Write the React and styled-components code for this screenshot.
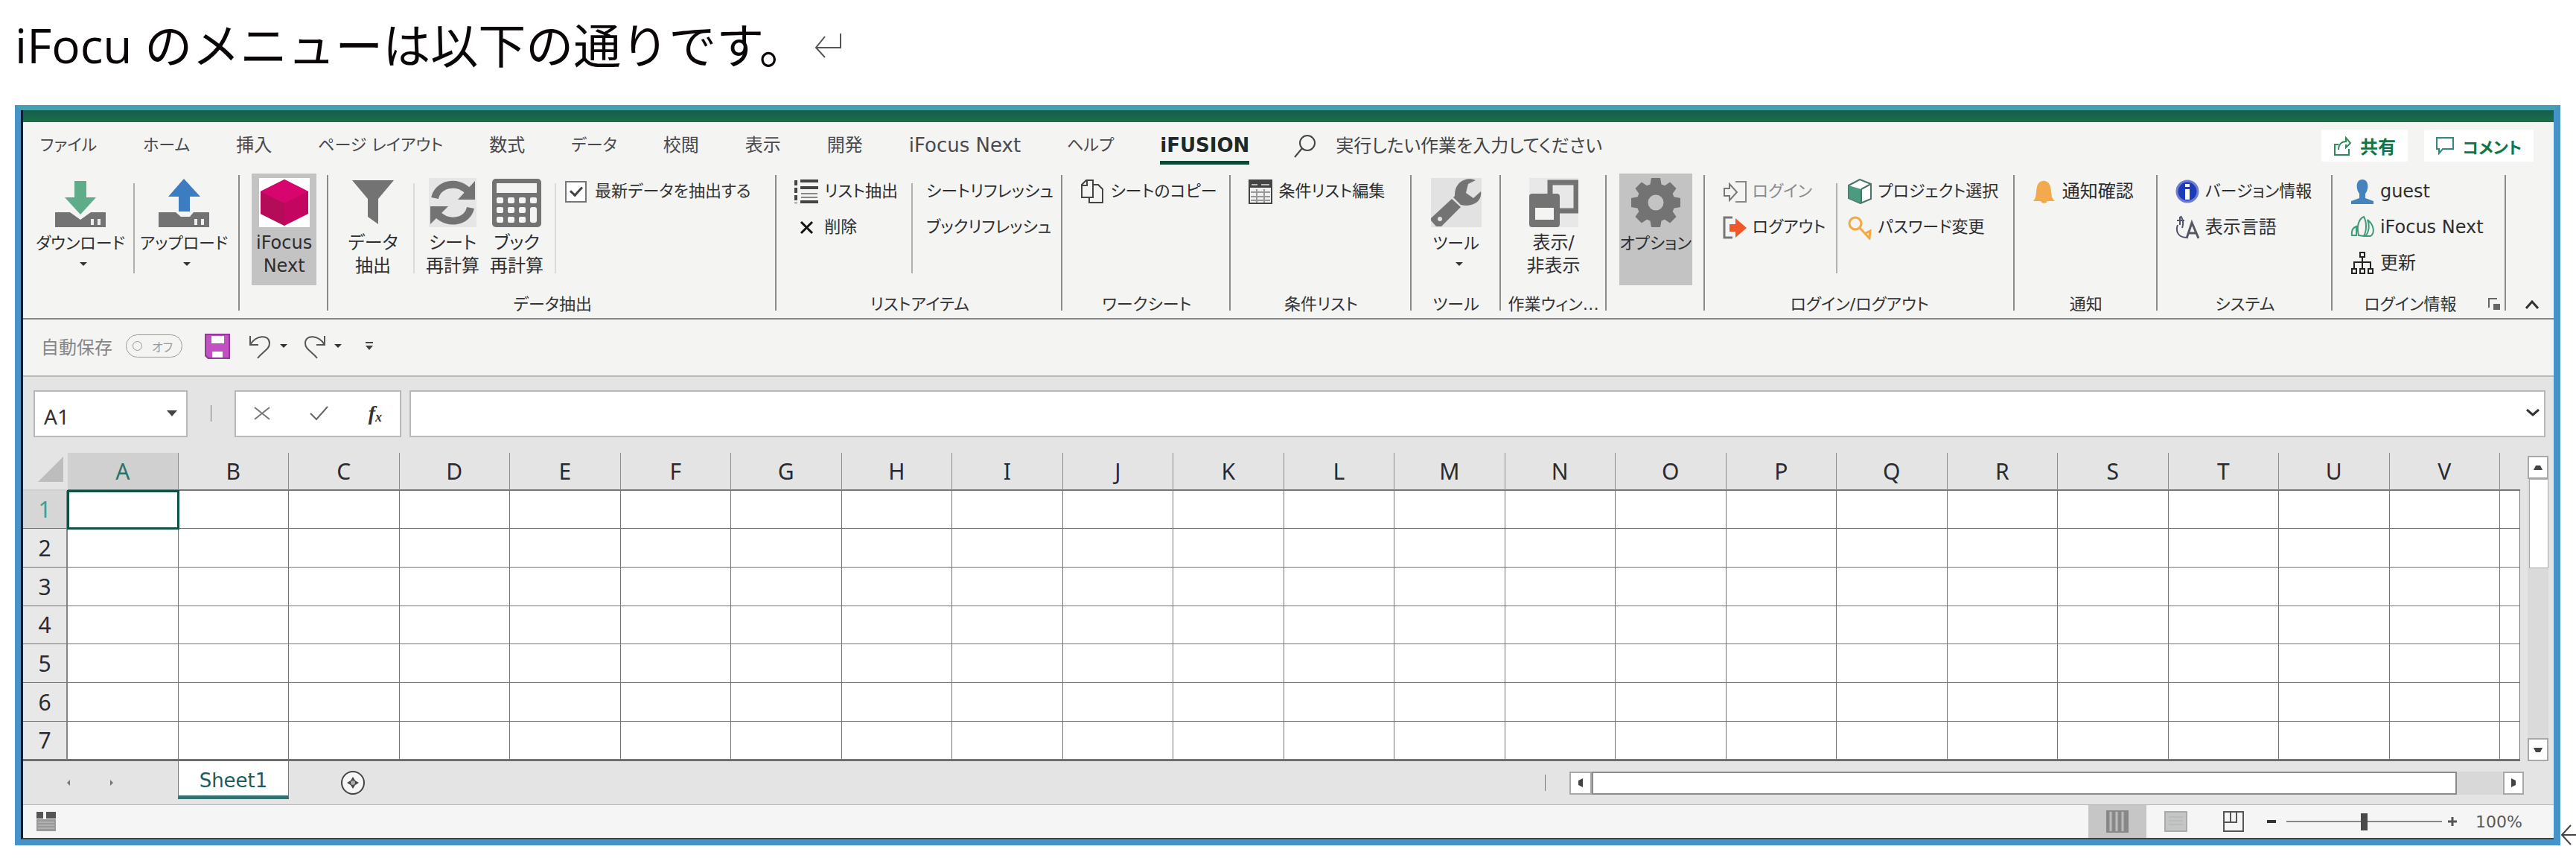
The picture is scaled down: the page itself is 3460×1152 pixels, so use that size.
import React from "react";
import styled, { createGlobalStyle, css } from "styled-components";

const GlobalStyle = createGlobalStyle`
  *, *::before, *::after { box-sizing: border-box; }
  body { margin: 0; background: #fff; overflow-x: hidden; }
  button, input { font: inherit; color: inherit; margin: 0; }
  svg { display: block; flex: none; }
`;

const uiFont = `"DejaVu Sans", "Noto Sans CJK JP", sans-serif`;
const sheetFont = `"Noto Sans", "Noto Sans CJK JP", sans-serif`;

/* ---------- page ---------- */
const Page = styled.main`
  padding: 0 21px 16px 20px;
  color: #333;
  font-family: ${uiFont};
  font-size: 24px;
  font-feature-settings: "palt";
`;
const Heading = styled.h1`
  display: flex;
  align-items: center;
  gap: 10px;
  height: 141px;
  margin: 0;
  padding-bottom: 20px;
  color: #0a0608;
  font: 400 64px/100px "Open Sans", "Noto Sans CJK JP", sans-serif;
  font-feature-settings: normal;
`;
const Figure = styled.div`
  display: flex;
  align-items: flex-end;
  margin-right: -21px;
`;
const Window = styled.section`
  flex: 1;
  min-width: 0;
  border: solid #4593c8;
  border-width: 7px 9px 8px 8px;
  border-top-color: #46a0b4;
  background: #f4f4f3;
`;
const Frame = styled.div`
  border-left: 3px solid #0a2036;
  border-bottom: 2px solid #2c4a4c;
`;
const AfterFigure = styled.div`
  width: 21px;
  overflow: hidden;
`;
const TitleBar = styled.div`
  height: 16px;
  background: linear-gradient(#125f4f, #1c6e46);
`;

/* ---------- tabs ---------- */
const TabRow = styled.nav`
  display: flex;
  align-items: flex-start;
  height: 69px;
  padding: 10px 27px 0 23px;
`;
const Tabs = styled.div`
  display: flex;
  gap: 62px;
`;
const Tab = styled.button`
  height: 47px;
  padding: 0;
  border: 0;
  border-bottom: 5px solid ${(p) => (p.$active ? "#0b4a36" : "transparent")};
  background: none;
  color: ${(p) => (p.$active ? "#1f2a28" : "#4a4a4e")};
  font-size: ${(p) => p.$size}px;
  font-weight: ${(p) => (p.$active ? 700 : 400)};
  line-height: 42px;
  white-space: nowrap;
`;
const Search = styled.label`
  display: flex;
  flex: 1;
  align-items: center;
  gap: 26px;
  height: 44px;
  margin-left: 60px;
`;
const SearchInput = styled.input`
  flex: 1;
  min-width: 0;
  padding: 0;
  border: 0;
  background: none;
  outline: 0;
  &::placeholder { color: #444; opacity: 1; }
`;
const Actions = styled.div`
  display: flex;
  gap: 22px;
`;
const ActionButton = styled.button`
  display: flex;
  align-items: center;
  justify-content: center;
  gap: 12px;
  width: ${(p) => p.$w}px;
  height: 43px;
  padding: 0;
  border: 0;
  border-radius: 2px;
  background: #fff;
  color: #12744a;
  font-size: ${(p) => p.$size}px;
  font-weight: 700;
  white-space: nowrap;
`;

/* ---------- ribbon ---------- */
const Ribbon = styled.div`
  display: flex;
  height: 196px;
  border-bottom: 2px solid #858587;
`;
const Group = styled.section`
  display: flex;
  flex: ${(p) => p.$w} 1 0;
  flex-direction: column;
  justify-content: space-between;
  min-width: 0;
  padding-bottom: 3px;
  background: ${(p) =>
    p.$last ? "none" : "linear-gradient(#8b8b8b, #8b8b8b) right 2px / 2px 182px no-repeat"};
`;
const GroupBody = styled.div`
  display: flex;
  gap: ${(p) => p.$gap || 0}px;
  justify-content: ${(p) => (p.$center ? "center" : "flex-start")};
  padding-left: ${(p) => p.$pad || 0}px;
`;
const GroupLabel = styled.h2`
  display: flex;
  align-items: center;
  justify-content: center;
  margin: 0;
  font-size: 22px;
  font-weight: 400;
  line-height: 30px;
  white-space: nowrap;
`;
const LabelText = styled.span`
  flex: 1;
  text-align: center;
`;
const InnerRule = styled.div`
  flex: none;
  width: 2px;
  height: 121px;
  margin: ${(p) => p.$m || "13px 0 0"};
  background: ${(p) => (p.$light ? "#dcdada" : "#b0b0b0")};
`;
const BigButton = styled.button`
  display: flex;
  flex: none;
  flex-direction: column;
  align-items: center;
  gap: 6px;
  width: ${(p) => p.$w}px;
  height: 150px;
  padding: 6px 0 0;
  border: 0;
  background: ${(p) => (p.$selected ? "#c3c3c3" : "none")};
  color: #2e2e30;
  font-size: ${(p) => (p.$long ? 22 : 24)}px;
  line-height: 31px;
  white-space: nowrap;
`;
const BigLabel = styled.span`
  display: flex;
  flex-direction: column;
  align-items: center;
`;
const Caret = styled.span`
  width: 0;
  height: 0;
  margin: ${(p) => p.$m || "10px 0 0 8px"};
  border: solid transparent;
  border-width: 5px 5px 0;
  border-top-color: #333;
`;
const Stack = styled.div`
  display: flex;
  flex: none;
  flex-direction: column;
  align-items: flex-start;
`;
const rowStyle = css`
  display: flex;
  align-items: center;
  gap: 8px;
  height: 48px;
  padding: 0;
  border: 0;
  background: none;
  font-size: ${(p) => (p.$large ? 24 : 22)}px;
  line-height: 32px;
  white-space: nowrap;
`;
const SmallButton = styled.button`
  ${rowStyle}
  color: ${(p) => (p.disabled ? "#8c8c90" : "#2e2e30")};
`;
const CheckRow = styled.label`
  ${rowStyle}
  gap: 11px;
`;
const Checkbox = styled.input`
  display: grid;
  place-items: center;
  width: 29px;
  height: 29px;
  border: 2px solid #77777a;
  background: #fff;
  appearance: none;
  &:checked::before {
    content: "";
    width: 10px;
    height: 16px;
    margin-bottom: 4px;
    border: solid #444;
    border-width: 0 3px 3px 0;
    transform: rotate(42deg);
  }
`;
const Launcher = styled.button`
  display: grid;
  width: 16px;
  height: 20px;
  margin-right: 8px;
  padding: 0;
  border: 0;
  background: none;
`;
const Collapse = styled.button`
  display: grid;
  place-items: center;
  height: 30px;
  margin-top: auto;
  padding: 0 0 0 6px;
  border: 0;
  background: none;
`;

/* ---------- quick access ---------- */
const QuickBar = styled.div`
  display: flex;
  align-items: center;
  height: 77px;
  padding: 0 24px 4px;
  border-bottom: 2px solid #b9b9b9;
`;
const AutoSave = styled.label`
  display: flex;
  align-items: center;
  gap: 18px;
  color: #86868a;
`;
const Toggle = styled.button`
  display: flex;
  align-items: center;
  justify-content: space-between;
  width: 76px;
  height: 31px;
  padding: 0 12px 0 8px;
  border: 1px solid #99999c;
  border-radius: 16px;
  background: none;
  color: #99999c;
  font-size: 16px;
`;
const Knob = styled.span`
  width: 13px;
  height: 13px;
  border: 1px solid #99999c;
  border-radius: 50%;
`;
const QuickTools = styled.div`
  display: flex;
  align-items: center;
  gap: 12px;
  margin-left: 16px;
`;
const IconButton = styled.button`
  display: grid;
  place-items: center;
  min-width: ${(p) => p.$w || 0}px;
  padding: 0;
  border: 0;
  background: none;
`;

/* ---------- formula bar ---------- */
const Workbook = styled.div`
  background: #e4e4e4;
`;
const FormulaBar = styled.div`
  display: flex;
  align-items: center;
  height: 102px;
  padding: 0 11px 4px 14px;
`;
const Field = styled.div`
  display: flex;
  align-items: center;
  width: ${(p) => (p.$w ? `${p.$w}px` : "auto")};
  flex: ${(p) => (p.$w ? "none" : 1)};
  height: 63px;
  margin-left: ${(p) => p.$ml || 0}px;
  padding: ${(p) => p.$p};
  border: 2px solid #b8b8b8;
  background: #fff;
`;
const FieldInput = styled.input`
  flex: 1;
  width: 0;
  min-width: 0;
  padding: 8px 0 0;
  border: 0;
  outline: 0;
  background: none;
  font-family: ${sheetFont};
  font-size: 28px;
`;
const Divider = styled.span`
  width: 1px;
  height: 22px;
  margin: ${(p) => p.$m};
  background: #77777a;
`;
const FxTools = styled.div`
  display: flex;
  flex: 1;
  align-items: center;
  justify-content: space-between;
`;
const Fx = styled.button`
  padding: 0;
  border: 0;
  background: none;
  color: #333;
  font: italic 700 28px/30px "Liberation Serif", serif;
  sub { font-size: 18px; line-height: 0; vertical-align: -2px; }
`;

/* ---------- sheet ---------- */
const SheetArea = styled.div`
  display: flex;
`;
const Grid = styled.table`
  flex: 1;
  width: 0;
  table-layout: fixed;
  border-collapse: separate;
  border-spacing: 0;
  border-bottom: 2px solid #6c6c70;
  font: 400 30px/40px ${sheetFont};
  color: #2a2a30;
`;
const ColHead = styled.th`
  height: 51px;
  padding: 0;
  border-right: 1px solid #8c8c90;
  border-bottom: 2px solid #77777a;
  font-weight: 400;
  background: ${(p) => (p.$on ? "#d0d0d0" : "#e4e4e4")};
  color: ${(p) => (p.$on ? "#2d7067" : "inherit")};
`;
const Corner = styled.th`
  width: 60px;
  padding: 0 6px 5px 0;
  border-bottom: 2px solid #d0d0d0;
  svg { margin-left: auto; }
`;
const EdgeHead = styled.th`
  width: 27px;
  padding: 0;
  border-bottom: 2px solid #77777a;
`;
const RowHead = styled.th`
  padding: 0;
  border-right: 2px solid #858589;
  border-bottom: 1px solid #747478;
  font-weight: 400;
  background: ${(p) => (p.$on ? "#d6d6d6" : "#e8e8e8")};
  color: ${(p) => (p.$on ? "#4a9a8c" : "inherit")};
`;
const Row = styled.tr`
  height: ${(p) => p.$h}px;
`;
const Cell = styled.td`
  padding: 0;
  border-right: 1px solid #747478;
  border-bottom: 1px solid #747478;
  background: #fff;
  ${(p) =>
    p.$on &&
    css`
      outline: 3px solid #0f5044;
      outline-offset: -2px;
    `}
`;
const VScroll = styled.div`
  display: flex;
  flex-direction: column;
  width: 28px;
  height: 410px;
  margin: 4px 7px 0 10px;
  background: #dadada;
`;
const ScrollButton = styled.button`
  display: grid;
  place-items: center;
  flex: none;
  width: ${(p) => p.$w}px;
  height: 31px;
  padding: 0;
  border: 2px solid #a8a8a8;
  background: #fff;
`;
const VThumb = styled.div`
  height: 120px;
  margin: 0 0 auto 2px;
  border: 1px solid #a8a8a8;
  background: #fff;
`;

/* ---------- sheet tabs ---------- */
const SheetBar = styled.div`
  display: flex;
  align-items: center;
  height: 59px;
  padding-right: 40px;
  border-bottom: 1px solid #b5b5b5;
`;
const SheetNav = styled.div`
  display: flex;
  flex: none;
  justify-content: flex-end;
  gap: 52px;
  width: 208px;
  padding-right: 86px;
`;
const SheetTab = styled.button`
  flex: none;
  align-self: flex-start;
  width: 149px;
  height: 51px;
  padding: 5px 0 0;
  border: solid #77777a;
  border-width: 0 1px 5px;
  border-bottom-color: #33706f;
  background: #fff;
  color: #1c5c5c;
  font-size: 26px;
`;
const AddSheet = styled.div`
  display: flex;
  flex: 1687 1 0;
  min-width: 0;
  button { margin-left: 69px; }
`;
const HScroll = styled.div`
  display: flex;
  flex: 1282 1 0;
  min-width: 0;
  height: 31px;
  background: #d8d8d8;
`;
const HThumb = styled.div`
  flex: 1;
  margin-right: 62px;
  border: 2px solid #8b8b8e;
  background: #fff;
`;

/* ---------- status bar ---------- */
const StatusBar = styled.footer`
  display: flex;
  align-items: center;
  justify-content: space-between;
  height: 44px;
  padding: 0 39px 0 18px;
  background: #f5f5f5;
`;
const StatusTools = styled.div`
  display: flex;
  align-items: center;
`;
const ViewButton = styled.button`
  display: grid;
  place-items: center;
  width: 78px;
  height: 44px;
  padding: 0;
  border: 0;
  background: ${(p) => (p.$on ? "#c6c6c6" : "none")};
`;
const ZoomSlider = styled.input`
  width: 209px;
  height: 24px;
  margin: 0 8px;
  background: linear-gradient(#88888a, #88888a) center / 100% 2px no-repeat;
  appearance: none;
  &::-webkit-slider-thumb {
    width: 9px;
    height: 23px;
    background: #4a4a4a;
    appearance: none;
  }
`;
const ZoomValue = styled.output`
  width: 66px;
  margin-left: 25px;
  font-size: 22px;
  color: #5a5a5e;
`;

/* ---------- drawings ---------- */
const G = "#737373";
const ReturnMark = () => (
  <svg width="37" height="34" viewBox="0 0 37 34" fill="none" stroke="#555" strokeWidth="2">
    <path d="M35 1V20H2M14 5L2 20L14 33" />
  </svg>
);
const EdgeMark = () => (
  <svg width="40" height="28" viewBox="0 0 40 28" fill="none" stroke="#444" strokeWidth="2">
    <path d="M14 1L2 14L14 27M2 14H40" />
  </svg>
);
const Drive = ({ up }) => (
  <svg width="68" height="66" viewBox="0 0 68 66">
    <path d={up ? "M0 46H23L30 52H42L47 46H68V66H0Z" : "M0 46H20L34 56L48 46H68V66H0Z"} fill={G} />
    <path d="M50 55v8M59 55v8" stroke="#eee" strokeWidth="4" />
    {up ? (
      <path d="M34 1L56 25H42V45H27V25H13Z" fill="#3b7dc0" />
    ) : (
      <path d="M26 4H42V26H55L34 49L13 26H26Z" fill="#5fac8b" />
    )}
  </svg>
);
const Cube = () => (
  <svg width="68" height="66" viewBox="0 0 68 66">
    <path d="M0 0H68V66H0Z" fill="#fff" />
    <path d="M34 2L66 18V48L34 64L2 48V18Z" fill="#c3065f" />
    <path d="M34 2L66 18L34 34L2 18Z" fill="#d9056e" />
    <path d="M34 34V64L2 48V18Z" fill="#b50c5a" />
  </svg>
);
const Funnel = () => (
  <svg width="58" height="66" viewBox="0 0 58 66">
    <path d="M1 3H57L36 28V62L22 52V28Z" fill={G} />
  </svg>
);
const Refresh = () => (
  <svg width="64" height="66" viewBox="0 0 64 66">
    <path d="M0 0H64V66H0Z" fill="#e6e6e6" />
    <g fill="none" stroke={G} strokeWidth="10">
      <path d="M8 27C12 8 38 2 53 18M56 40C52 59 26 64 11 48" />
    </g>
    <path d="M62 4V29H39Z M2 62V38H26Z" fill={G} />
  </svg>
);
const Calculator = () => (
  <svg width="66" height="66" viewBox="0 0 66 66">
    <rect y="1" width="66" height="65" rx="5" fill={G} />
    <rect x="6" y="7" width="54" height="13" fill="#f4f4f3" />
    <g fill="#f4f4f3">
      {[26, 39, 52].map((y) => [6, 21, 36].map((x) => <rect key={`${x}-${y}`} x={x} y={y} width="9" height="8" rx="2" />))}
      <rect x="51" y="26" width="9" height="8" rx="2" />
      <rect x="51" y="39" width="9" height="21" rx="3" />
    </g>
  </svg>
);
const Wrench = () => (
  <svg width="68" height="66" viewBox="0 0 68 66">
    <path d="M0 0H68V66H0Z" fill="#e2e2e2" />
    <path d="M60 3C45-3 31 8 32 24L30 26L40 36C58 40 69 30 67 18L57 27L47 20L50 8Z" fill={G} />
    <path d="M28 28L40 39L14 65H7L0 57V54Z" fill={G} />
    <circle cx="12" cy="55" r="3" fill="#e2e2e2" />
  </svg>
);
const Panels = () => (
  <svg width="66" height="66" viewBox="0 0 66 66">
    <path d="M0 0H66V66H0Z" fill="#e8e8e8" />
    <rect x="28" y="6" width="35" height="38" fill="none" stroke={G} strokeWidth="7" />
    <rect y="21" width="41" height="45" rx="4" fill={G} />
    <rect x="8" y="40" width="25" height="16" fill="#f4f4f3" />
  </svg>
);
const Gear = () => (
  <svg width="66" height="66" viewBox="-33 -33 66 66">
    <circle r="18" fill="none" stroke={G} strokeWidth="15" />
    {[0, 45, 90, 135, 180, 225, 270, 315].map((a) => (
      <path key={a} d="M-8 -22L-6 -33H6L8 -22Z" fill={G} transform={`rotate(${a})`} />
    ))}
  </svg>
);
const S = ({ children }) => (
  <svg width="32" height="34" viewBox="0 0 32 34" fill="none" stroke="#444" strokeWidth="2">
    {children}
  </svg>
);
const ListIcon = () => (
  <S>
    <path d="M2 2V33" strokeDasharray="7 3" strokeWidth="4" />
    <path d="M8 3H32M8 12H32M8 31H32" strokeWidth="4" />
    <path d="M9 20H31M9 25H31" stroke="#888" />
  </S>
);
const CrossIcon = () => (
  <S>
    <path d="M9 10L24 25M24 10L9 25" stroke="#111" strokeWidth="3" />
  </S>
);
const CopyIcon = () => (
  <S>
    <path d="M9 25H2V8L8 2H17V25H9M9 2V9H2" />
    <path d="M17 8H24L30 14V32H12V25" />
  </S>
);
const TableIcon = () => (
  <S>
    <rect x="1" y="2" width="30" height="31" fill="#f0f0f0" />
    <path d="M1 7H31" stroke="#444" strokeWidth="10" />
    <path d="M4 8H12M17 8H28" stroke="#bbb" />
    <path d="M3 18H29M3 24H29M3 29H29M11 14V32M21 14V32" stroke="#999" />
  </S>
);
const LoginIcon = () => (
  <S>
    <path d="M17 4H31V31H17" stroke="#888" />
    <path d="M2 13V23H9V29L19 18L9 7V13Z" stroke="#777" />
  </S>
);
const LogoutIcon = () => (
  <S>
    <path d="M13 4H2V31H13" stroke="#777" strokeWidth="3" />
    <path d="M9 13H17V5L32 18L17 31V23H9Z" fill="#f0582a" stroke="none" />
  </S>
);
const BoxIcon = () => (
  <S>
    <path d="M1 9L16 1L31 7V27L17 33L1 26Z" fill="#fff" stroke="#4b7468" />
    <path d="M1 9L18 14V33L1 26Z" fill="#4a9b80" stroke="none" />
    <path d="M18 14L31 7M18 14V32" stroke="#4b7468" />
  </S>
);
const KeyIcon = () => (
  <S>
    <circle cx="10" cy="12" r="8" stroke="#f5a742" strokeWidth="3" />
    <path d="M16 18L29 32L30 22L24 25" stroke="#f5a742" strokeWidth="3" />
  </S>
);
const BellIcon = () => (
  <S>
    <path d="M1 30C6 25 4 18 6 11C8 0 22 0 24 11C26 18 24 25 30 30H20C18 34 13 34 11 30Z" fill="#f3aa4c" stroke="none" />
  </S>
);
const InfoIcon = () => (
  <S>
    <circle cx="16" cy="17" r="14" fill="#1f3cb8" stroke="#6d80cf" strokeWidth="3" />
    <path d="M16 7V11M16 14V28" stroke="#fff" strokeWidth="6" />
  </S>
);
const LanguageIcon = () => (
  <S>
    <path d="M6 3V14M2 8H12M3 14C0 22 3 30 14 31M7 2C10 6 11 12 9 18" stroke="#50536e" />
    <path d="M15 32L22 11L31 32M18 25H27" stroke="#555863" strokeWidth="3" />
  </S>
);
const PersonIcon = () => (
  <S>
    <path d="M16 1C25 1 25 14 20 20V26L31 30V34H1V30L12 26V20C7 14 7 1 16 1Z" fill="#4583bd" stroke="none" />
  </S>
);
const LeafIcon = () => (
  <S>
    <path d="M2 28C1 20 5 17 8 16V28ZM11 28C8 16 11 6 18 3C22 10 22 22 18 29ZM20 29C25 24 26 14 23 7C32 14 33 25 27 29Z" stroke="#3f9b79" />
  </S>
);
const TreeIcon = () => (
  <S>
    <path d="M13 3H19V9H13ZM16 9V16M5 25V16H27V25M16 16V25M2 25H8V31H2ZM13 25H19V31H13ZM24 25H30V31H24Z" stroke="#222" />
  </S>
);
const Chevron = ({ up }) => (
  <svg width="18" height="12" viewBox="0 0 18 12" fill="none" stroke="#333" strokeWidth="3">
    <path d={up ? "M1 11L9 2L17 11" : "M1 1L9 8L17 1"} />
  </svg>
);
const Arrow = ({ d }) => (
  <svg width="14" height="14" viewBox="0 0 14 14" fill="#444">
    <path d={d} />
  </svg>
);

/* ---------- content ---------- */
const tabs = [
  ["ファイル", 22],
  ["ホーム", 22],
  ["挿入", 24],
  ["ページ レイアウト", 22],
  ["数式", 24],
  ["データ", 22],
  ["校閲", 24],
  ["表示", 24],
  ["開発", 24],
  ["iFocus Next", 26],
  ["ヘルプ", 22],
  ["iFUSION", 26],
];
const columns = "ABCDEFGHIJKLMNOPQRSTUV".split("");
const rows = [1, 2, 3, 4, 5, 6, 7];

const Big = ({ icon, lines, caret, ...rest }) => (
  <BigButton {...rest}>
    {icon}
    <BigLabel>
      {lines.map((l) => (
        <span key={l}>{l}</span>
      ))}
      {caret && <Caret />}
    </BigLabel>
  </BigButton>
);
const Small = ({ icon, children, ...rest }) => (
  <SmallButton {...rest}>
    {icon}
    {children}
  </SmallButton>
);

export default function App() {
  return (
    <Page>
      <GlobalStyle />
      <Heading>
        iFocu のメニューは以下の通りです。
        <ReturnMark />
      </Heading>
      <Figure>
        <Window>
          <Frame>
            <TitleBar />
            <TabRow>
              <Tabs>
                {tabs.map(([name, size]) => (
                  <Tab key={name} $size={size} $active={name === "iFUSION"}>{name}</Tab>
                ))}
              </Tabs>
              <Search>
                <svg width="30" height="32" viewBox="0 0 30 32" fill="none" stroke="#444" strokeWidth="2">
                  <circle cx="18" cy="12" r="10" />
                  <path d="M11 19L1 31" />
                </svg>
                <SearchInput aria-label="操作アシスト" placeholder="実行したい作業を入力してください" />
              </Search>
              <Actions>
                <ActionButton $w={116} $size={24}>
                  <svg width="24" height="26" viewBox="0 0 24 26" fill="none" stroke="#2f8a5b" strokeWidth="2">
                    <path d="M7 11H2V25H21V17M7 18C7 11 11 7 17 7V2L23 9L17 15V11" />
                  </svg>
                  共有
                </ActionButton>
                <ActionButton $w={147} $size={22}>
                  <svg width="24" height="26" viewBox="0 0 24 26" fill="none" stroke="#2f8a7b" strokeWidth="2">
                    <path d="M1 2H23V17H9L4 23V17H1Z" />
                  </svg>
                  コメント
                </ActionButton>
              </Actions>
            </TabRow>

            <Ribbon>
              <Group $w={291}>
                <GroupBody $pad={6}>
                  <Big $w={142} $long icon={<Drive />} lines={["ダウンロード"]} caret />
                  <InnerRule />
                  <Big $w={132} $long icon={<Drive up />} lines={["アップロード"]} caret />
                </GroupBody>
              </Group>
              <Group $w={119}>
                <GroupBody $center>
                  <Big $w={87} $selected icon={<Cube />} lines={["iFocus", "Next"]} />
                </GroupBody>
              </Group>
              <Group $w={602}>
                <GroupBody $pad={6}>
                  <Big $w={108} icon={<Funnel />} lines={["データ", "抽出"]} />
                  <InnerRule $light $m="13px 8px 0 0" />
                  <Big $w={86} icon={<Refresh />} lines={["シート", "再計算"]} />
                  <Big $w={86} icon={<Calculator />} lines={["ブック", "再計算"]} />
                  <InnerRule $light $m="13px 12px 0 8px" />
                  <Stack>
                    <CheckRow>
                      <Checkbox type="checkbox" defaultChecked />
                      最新データを抽出する
                    </CheckRow>
                  </Stack>
                </GroupBody>
                <GroupLabel>データ抽出</GroupLabel>
              </Group>
              <Group $w={384}>
                <GroupBody $pad={24} $gap={18}>
                  <Stack>
                    <Small icon={<ListIcon />}>リスト抽出</Small>
                    <Small icon={<CrossIcon />}>削除</Small>
                  </Stack>
                  <InnerRule />
                  <Stack>
                    <Small>シートリフレッシュ</Small>
                    <Small>ブックリフレッシュ</Small>
                  </Stack>
                </GroupBody>
                <GroupLabel>リストアイテム</GroupLabel>
              </Group>
              <Group $w={226}>
                <GroupBody $pad={24}>
                  <Small icon={<CopyIcon />}>シートのコピー</Small>
                </GroupBody>
                <GroupLabel>ワークシート</GroupLabel>
              </Group>
              <Group $w={242}>
                <GroupBody $pad={24}>
                  <Small icon={<TableIcon />}>条件リスト編集</Small>
                </GroupBody>
                <GroupLabel>条件リスト</GroupLabel>
              </Group>
              <Group $w={120}>
                <GroupBody $center>
                  <Big $w={108} $long icon={<Wrench />} lines={["ツール"]} caret />
                </GroupBody>
                <GroupLabel>ツール</GroupLabel>
              </Group>
              <Group $w={142}>
                <GroupBody $center>
                  <Big $w={108} icon={<Panels />} lines={["表示/", "非表示"]} />
                </GroupBody>
                <GroupLabel>作業ウィン…</GroupLabel>
              </Group>
              <Group $w={132}>
                <GroupBody $center>
                  <Big $w={98} $selected $long icon={<Gear />} lines={["オプション"]} />
                </GroupBody>
              </Group>
              <Group $w={416}>
                <GroupBody $pad={24} $gap={14}>
                  <Stack>
                    <Small icon={<LoginIcon />} disabled>ログイン</Small>
                    <Small icon={<LogoutIcon />}>ログアウト</Small>
                  </Stack>
                  <InnerRule />
                  <Stack>
                    <Small icon={<BoxIcon />}>プロジェクト選択</Small>
                    <Small icon={<KeyIcon />}>パスワード変更</Small>
                  </Stack>
                </GroupBody>
                <GroupLabel>ログイン/ログアウト</GroupLabel>
              </Group>
              <Group $w={192}>
                <GroupBody $pad={24}>
                  <Small $large icon={<BellIcon />}>通知確認</Small>
                </GroupBody>
                <GroupLabel>通知</GroupLabel>
              </Group>
              <Group $w={235}>
                <GroupBody $pad={24}>
                  <Stack>
                    <Small icon={<InfoIcon />}>バージョン情報</Small>
                    <Small $large icon={<LanguageIcon />}>表示言語</Small>
                  </Stack>
                </GroupBody>
                <GroupLabel>システム</GroupLabel>
              </Group>
              <Group $w={233}>
                <GroupBody $pad={24}>
                  <Stack>
                    <Small $large icon={<PersonIcon />}>guest</Small>
                    <Small $large icon={<LeafIcon />}>iFocus Next</Small>
                    <Small $large icon={<TreeIcon />}>更新</Small>
                  </Stack>
                </GroupBody>
                <GroupLabel>
                  <LabelText>ログイン情報</LabelText>
                  <Launcher aria-label="詳細">
                    <svg width="16" height="18" viewBox="0 0 16 18" fill="none" stroke="#666" strokeWidth="2">
                      <path d="M1 14V2H12" />
                      <path d="M8 16V10H15V16Z" fill="#666" />
                    </svg>
                  </Launcher>
                </GroupLabel>
              </Group>
              <Group $w={64} $last>
                <Collapse aria-label="リボンを折りたたむ"><Chevron up /></Collapse>
              </Group>
            </Ribbon>

            <QuickBar>
              <AutoSave>
                自動保存
                <Toggle role="switch" aria-checked="false"><Knob />オフ</Toggle>
              </AutoSave>
              <QuickTools>
                <IconButton aria-label="保存" $w={62}>
                  <svg width="34" height="34" viewBox="0 0 34 34">
                    <path d="M0 0H34V34H4L0 30Z" fill="#c24fc4" />
                    <path d="M9 3H26V13H9ZM10 24H24V32H10Z" fill="#fff" />
                    <path d="M1 1H33V33H5L1 29Z" fill="none" stroke="#8f3a94" strokeWidth="2" />
                  </svg>
                </IconButton>
                <IconButton aria-label="元に戻す">
                  <svg width="29" height="34" viewBox="0 0 29 34" fill="none" stroke="#555" strokeWidth="2">
                    <path d="M1 3V15H12M1 15C8 2 27 0 27 13C27 21 18 24 11 33" />
                  </svg>
                </IconButton>
                <Caret $m="0 10px 0 0" />
                <IconButton aria-label="やり直し">
                  <svg width="29" height="34" viewBox="0 0 29 34" fill="none" stroke="#555" strokeWidth="2">
                    <path d="M28 3V15H17M28 15C21 2 2 0 2 13C2 21 11 24 18 33" />
                  </svg>
                </IconButton>
                <Caret $m="0 20px 0 0" />
                <IconButton aria-label="カスタマイズ">
                  <svg width="10" height="12" viewBox="0 0 10 12" fill="#444">
                    <path d="M0 0H10V2H0ZM0 5H10L5 11Z" />
                  </svg>
                </IconButton>
              </QuickTools>
            </QuickBar>

            <Workbook>
              <FormulaBar>
                <Field $w={207} $p="0 12px">
                  <FieldInput aria-label="名前ボックス" defaultValue="A1" />
                  <IconButton aria-label="名前の一覧">
                    <svg width="14" height="8" viewBox="0 0 14 8" fill="#444"><path d="M0 0H14L7 8Z" /></svg>
                  </IconButton>
                </Field>
                <Divider $m="0 31px" />
                <Field $w={224} $p="0 24px">
                  <FxTools>
                    <IconButton aria-label="キャンセル">
                      <svg width="22" height="18" viewBox="0 0 22 18" stroke="#77777a" strokeWidth="2"><path d="M1 1L21 17M21 1L1 17" /></svg>
                    </IconButton>
                    <IconButton aria-label="入力">
                      <svg width="25" height="20" viewBox="0 0 25 20" fill="none" stroke="#666" strokeWidth="2"><path d="M1 10L9 18L24 1" /></svg>
                    </IconButton>
                    <Fx aria-label="関数の挿入">f<sub>x</sub></Fx>
                  </FxTools>
                </Field>
                <Field $ml={11} $p="0 6px 0 12px">
                  <FieldInput aria-label="数式バー" />
                  <Chevron />
                </Field>
              </FormulaBar>

              <SheetArea>
                <Grid>
                  <thead>
                    <tr>
                      <Corner>
                        <svg width="34" height="34" viewBox="0 0 34 34"><path d="M34 0V34H0Z" fill="#bdbdbd" /></svg>
                      </Corner>
                      {columns.map((c, i) => (
                        <ColHead key={c} scope="col" $on={i === 0}>{c}</ColHead>
                      ))}
                      <EdgeHead />
                    </tr>
                  </thead>
                  <tbody>
                    {rows.map((r) => (
                      <Row key={r} $h={r % 3 === 1 ? 51 : 52}>
                        <RowHead scope="row" $on={r === 1}>{r}</RowHead>
                        {columns.map((c, i) => (
                          <Cell key={c} $on={r === 1 && i === 0} />
                        ))}
                        <Cell />
                      </Row>
                    ))}
                  </tbody>
                </Grid>
                <VScroll>
                  <ScrollButton $w={28} aria-label="上へ"><Arrow d="M4 4H10L13 10H1Z" /></ScrollButton>
                  <VThumb />
                  <ScrollButton $w={28} aria-label="下へ"><Arrow d="M1 4H13L10 10H4Z" /></ScrollButton>
                </VScroll>
              </SheetArea>

              <SheetBar>
                <SheetNav>
                  <svg width="6" height="8" viewBox="0 0 6 8" fill="#77777a"><path d="M5 0V8L1 4Z" /></svg>
                  <svg width="6" height="8" viewBox="0 0 6 8" fill="#77777a"><path d="M1 0V8L5 4Z" /></svg>
                </SheetNav>
                <SheetTab>Sheet1</SheetTab>
                <AddSheet>
                  <IconButton aria-label="新しいシート">
                    <svg width="34" height="34" viewBox="0 0 34 34">
                      <circle cx="17" cy="17" r="15" fill="#f6f6f6" stroke="#444" strokeWidth="2" />
                      <path d="M17 9L20 14L25 17L20 20L17 25L14 20L9 17L14 14Z" fill="#444" />
                      <circle cx="17" cy="17" r="3" fill="#aaa" />
                    </svg>
                  </IconButton>
                </AddSheet>
                <Divider $m="0 32px 0 0" />
                <HScroll>
                  <ScrollButton $w={30} aria-label="左へ"><Arrow d="M10 1V13L4 10V4Z" /></ScrollButton>
                  <HThumb />
                  <ScrollButton $w={28} aria-label="右へ"><Arrow d="M4 1V13L10 10V4Z" /></ScrollButton>
                </HScroll>
              </SheetBar>
            </Workbook>

            <StatusBar>
              <svg width="26" height="26" viewBox="0 0 26 26">
                <path d="M0 0H9V9H0ZM13 0H26V9H13Z" fill="#555" />
                <path d="M0 10H26V26H0Z" fill="#999" />
                <path d="M2 14H24M2 18H24M2 22H24" stroke="#c8c8c8" />
              </svg>
              <StatusTools>
                <ViewButton $on aria-label="標準">
                  <svg width="30" height="30" viewBox="0 0 30 30"><path d="M0 0H30V30H0Z" fill="#888" /><path d="M6 2V28M14 2V28M22 2V28" stroke="#bbb" strokeWidth="3" /></svg>
                </ViewButton>
                <ViewButton aria-label="ページ レイアウト">
                  <svg width="31" height="28" viewBox="0 0 31 28"><path d="M1 1H30V27H1Z" fill="#c4c6c6" stroke="#aaa" strokeWidth="2" /><path d="M6 8H25M6 13H25M6 18H25" stroke="#b0b0b0" /></svg>
                </ViewButton>
                <ViewButton aria-label="改ページ プレビュー">
                  <svg width="28" height="28" viewBox="0 0 28 28" fill="none" stroke="#555" strokeWidth="2"><path d="M1 1H27V27H1ZM1 15H18V1M10 1V15" /></svg>
                </ViewButton>
                <IconButton aria-label="縮小" $w={24}>
                  <svg width="12" height="4" viewBox="0 0 12 4"><path d="M0 0H12V4H0Z" fill="#333" /></svg>
                </IconButton>
                <ZoomSlider type="range" aria-label="ズーム" min="0" max="100" defaultValue="50" />
                <IconButton aria-label="拡大">
                  <svg width="12" height="14" viewBox="0 0 12 14" stroke="#555" strokeWidth="3"><path d="M0 7H12M6 1V13" /></svg>
                </IconButton>
                <ZoomValue>100%</ZoomValue>
              </StatusTools>
            </StatusBar>
          </Frame>
        </Window>
        <AfterFigure><EdgeMark /></AfterFigure>
      </Figure>
    </Page>
  );
}
